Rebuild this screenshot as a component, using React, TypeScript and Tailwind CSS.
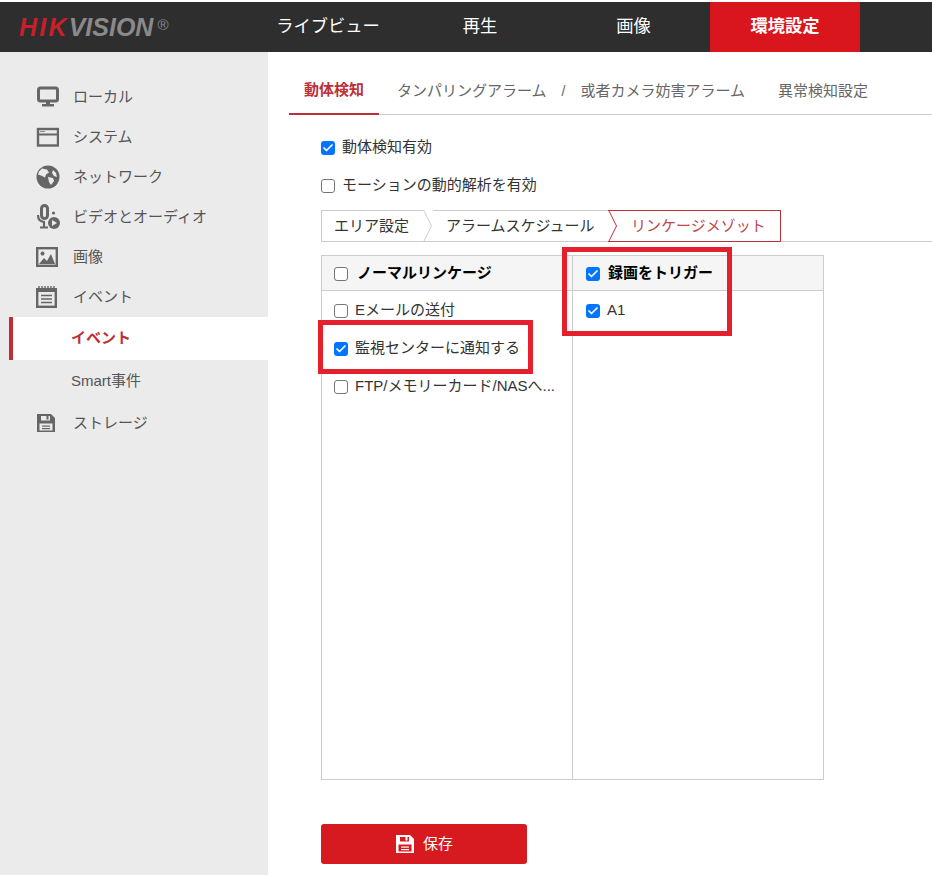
import { Check } from "lucide-react";

const font = "font-['Liberation_Sans','Noto_Sans_CJK_JP',sans-serif]";

function Monitor() {
  return (
    <svg width="23" height="22" viewBox="0 0 23 22" fill="none">
      <rect x="2.5" y="2" width="19" height="13" rx="2" stroke="#666" strokeWidth="3" />
      <rect x="10" y="16" width="4" height="3" fill="#666" />
      <rect x="6" y="18" width="12" height="2.5" fill="#666" />
    </svg>
  );
}

function Win() {
  return (
    <svg width="23" height="22" viewBox="0 0 23 22" fill="none">
      <rect x="2" y="3" width="20" height="16.5" stroke="#666" strokeWidth="2.4" />
      <rect x="2" y="7.5" width="20" height="2" fill="#666" />
      <rect x="4" y="5" width="5" height="1" fill="#888" />
    </svg>
  );
}

function Globe() {
  return (
    <svg width="24" height="24" viewBox="0 0 24 24">
      <circle cx="12" cy="12" r="11.5" fill="#666" />
      <path d="M6 3.5l5 1 2 3-3 2-1 3-4-2-3-1 1-3z" fill="#ebebeb" />
      <path d="M12 12l5 1 1 3-3 4-2-3z" fill="#ebebeb" />
      <path d="M17 5l3 3 1 4-3-1-2-3z" fill="#ebebeb" />
    </svg>
  );
}

function MicPlay() {
  return (
    <svg width="24" height="26" viewBox="0 0 24 26" fill="none">
      <rect x="5.5" y="1.5" width="6" height="13" rx="3" stroke="#666" strokeWidth="3" />
      <path d="M2 11c0 5 3 7 7 7M4 23.5h8M8 18v5" stroke="#666" strokeWidth="2.2" />
      <circle cx="17.5" cy="9" r="1.6" fill="#666" />
      <circle cx="18" cy="19" r="6" fill="#666" />
      <path d="M16 16l5 3-5 3z" fill="#ebebeb" />
    </svg>
  );
}

function Pic() {
  return (
    <svg width="22" height="20" viewBox="0 0 22 20" fill="none">
      <rect x="1.2" y="1.2" width="19.6" height="17.6" stroke="#666" strokeWidth="2.4" />
      <circle cx="6.5" cy="6.5" r="2" fill="#666" />
      <path d="M3 17l5-6 3 3 4-7 4 10z" fill="#666" />
    </svg>
  );
}

function Notepad() {
  return (
    <svg width="21" height="22" viewBox="0 0 21 22" fill="none">
      <rect x="1.2" y="3.2" width="18.6" height="17.6" stroke="#666" strokeWidth="2.4" />
      <path d="M3 0v3M6 0v3M9 0v3M12 0v3M15 0v3M18 0v3" stroke="#666" strokeWidth="1.4" />
      <path d="M1 5h19" stroke="#666" strokeWidth="2" />
      <path d="M5 9.5h11M5 13h11M5 16.5h11" stroke="#666" strokeWidth="1.6" />
    </svg>
  );
}

function Floppy({ color = "#666", cut = "#ebebeb" }: { color?: string; cut?: string }) {
  return (
    <svg width="20" height="20" viewBox="0 0 20 20">
      <path d="M1 1h14l4 4v14H1z" fill={color} />
      <rect x="5" y="3" width="9" height="4.5" fill={cut} />
      <rect x="10.5" y="3" width="2" height="3.5" fill={color} />
      <rect x="3.5" y="10.5" width="13" height="7" fill={cut} />
      <rect x="6" y="12.5" width="8" height="1.2" fill={color} />
      <rect x="6" y="15" width="8" height="1.2" fill={color} />
    </svg>
  );
}

function Box({ on }: { on?: boolean }) {
  return on ? (
    <span className="mt-[2px] flex h-[14px] w-[14px] shrink-0 items-center justify-center rounded-[3px] bg-[#0075ff]">
      <Check size={12} strokeWidth={3.5} color="white" />
    </span>
  ) : (
    <span className="mt-[2px] h-[14px] w-[14px] shrink-0 rounded-[3px] border border-[#767676] bg-white" />
  );
}

const menu = [
  { icon: <Monitor />, label: "ローカル" },
  { icon: <Win />, label: "システム" },
  { icon: <Globe />, label: "ネットワーク" },
  { icon: <MicPlay />, label: "ビデオとオーディオ" },
  { icon: <Pic />, label: "画像" },
  { icon: <Notepad />, label: "イベント" },
];

function Sidebar() {
  return (
    <aside className="flex w-[268px] shrink-0 flex-col bg-[#ebebeb] pt-[25px] text-[15px] text-[#555]">
      {menu.map((m) => (
        <div key={m.label} className="flex h-10 items-center pl-9">
          <span className="flex w-[37px] justify-start">{m.icon}</span>
          <span>{m.label}</span>
        </div>
      ))}
      <div className="ml-[9px] flex h-[43px] items-center border-l-4 border-[#bd2f37] bg-white pl-[58px] font-bold text-[#bd2f37]">
        イベント
      </div>
      <div className="flex h-[43px] items-center pl-[71px]">Smart事件</div>
      <div className="flex h-10 items-center pl-9">
        <span className="w-[37px]">
          <Floppy />
        </span>
        <span>ストレージ</span>
      </div>
    </aside>
  );
}

function Chevron({ color }: { color: string }) {
  return (
    <svg width="10" height="32" viewBox="0 0 10 32" fill="none" className="shrink-0">
      <path d="M0.5 0l8 16-8 16" stroke={color} strokeWidth="1" />
    </svg>
  );
}

export default function App() {
  return (
    <div className={`relative h-[875px] w-[932px] overflow-hidden bg-white pt-[2px] ${font}`}>
      <header className="flex h-[50px] items-center bg-[#2e2e2e] text-[17.3px] text-white">
        <div className="flex w-[253px] items-baseline pl-[19px] text-[25px] font-bold italic leading-none">
          <span className="tracking-[2.2px] text-[#c8202a]">HIK</span>
          <span className="text-[#8a8a8a]">VISION</span>
          <span className="ml-[4px] mt-[2px] self-start text-[15px] font-normal not-italic text-[#8a8a8a]">®</span>
        </div>
        <div className="flex w-[150px] justify-center">ライブビュー</div>
        <div className="flex w-[154px] justify-center">再生</div>
        <div className="flex w-[153px] justify-center">画像</div>
        <div className="flex h-full w-[150px] items-center justify-center bg-[#d9161e] font-bold">環境設定</div>
      </header>
      <div className="flex h-[823px]">
        <Sidebar />
        <main className="min-w-0 flex-1 pl-[21px] text-[15px] text-[#333]">
          <nav className="mt-[15px] flex h-[48px] border-b border-[#ccc] text-[#666]">
            <div className="-mb-[1px] flex h-[48px] w-[90px] items-center justify-center border-b-2 border-[#bd2f37] pt-[1px] font-bold text-[#bd2f37]">
              動体検知
            </div>
            <div className="ml-[18px] flex h-full items-center pt-[2px]">
              <span>タンパリングアラーム</span>
              <span className="mx-[15px] text-[14px]">/</span>
              <span>或者カメラ妨害アラーム</span>
              <span className="ml-[33px]">異常検知設定</span>
            </div>
          </nav>
          <div className="ml-[32px] mt-[22px] flex h-5 items-center gap-[7px]">
            <Box on />
            <span>動体検知有効</span>
          </div>
          <div className="ml-[32px] mt-[18px] flex h-5 items-center gap-[7px]">
            <Box />
            <span>モーションの動的解析を有効</span>
          </div>
          <div className="ml-[32px] mt-[15px] flex h-[32px] border-b border-[#ccc]">
            <div className="flex h-[32px] w-[102px] items-center border-y border-l border-[#ccc] pl-3">エリア設定</div>
            <Chevron color="#ccc" />
            <div className="flex h-[32px] w-[175px] items-center border-y border-[#ccc] pl-[13px]">アラームスケジュール</div>
            <div className="flex h-[32px] items-center border-y border-r border-[#bd2f37]">
              <Chevron color="#bd2f37" />
              <span className="pl-[13px] pr-[14px] text-[#c0474e]">リンケージメゾット</span>
            </div>
          </div>
          <div className="ml-[32px] mt-[13px] grid h-[525px] w-[503px] grid-cols-[251px_1fr] border border-[#ccc]">
            <div className="border-r border-[#ccc]">
              <div className="flex h-[35px] items-center gap-[9px] border-b border-[#ccc] bg-[#f5f5f5] pl-3 font-bold text-black">
                <Box />
                <span>ノーマルリンケージ</span>
              </div>
              <div className="flex h-[38px] items-center gap-[7px] pl-3">
                <Box />
                <span>Eメールの送付</span>
              </div>
              <div className="flex h-[38px] items-center gap-[7px] pl-3">
                <Box on />
                <span>監視センターに通知する</span>
              </div>
              <div className="flex h-[38px] items-center gap-[7px] pl-3">
                <Box />
                <span>FTP/メモリーカード/NASへ...</span>
              </div>
            </div>
            <div>
              <div className="flex h-[35px] items-center gap-2 border-b border-[#ccc] bg-[#f5f5f5] pl-[13px] font-bold text-black">
                <Box on />
                <span>録画をトリガー</span>
              </div>
              <div className="flex h-[38px] items-center gap-[7px] pl-[13px]">
                <Box on />
                <span>A1</span>
              </div>
            </div>
          </div>
          <button className="ml-[32px] mt-[44px] flex h-10 w-[206px] items-center justify-center gap-2 rounded-[3px] bg-[#d71920] text-[15px] text-white">
            <Floppy color="white" cut="#d71920" />
            保存
          </button>
        </main>
      </div>
      <div className="absolute left-[318px] top-[320px] h-[54px] w-[215px] border-[5px] border-[#e3202c]" />
      <div className="absolute left-[562px] top-[247px] h-[89px] w-[170px] border-[5px] border-[#e3202c]" />
    </div>
  );
}
